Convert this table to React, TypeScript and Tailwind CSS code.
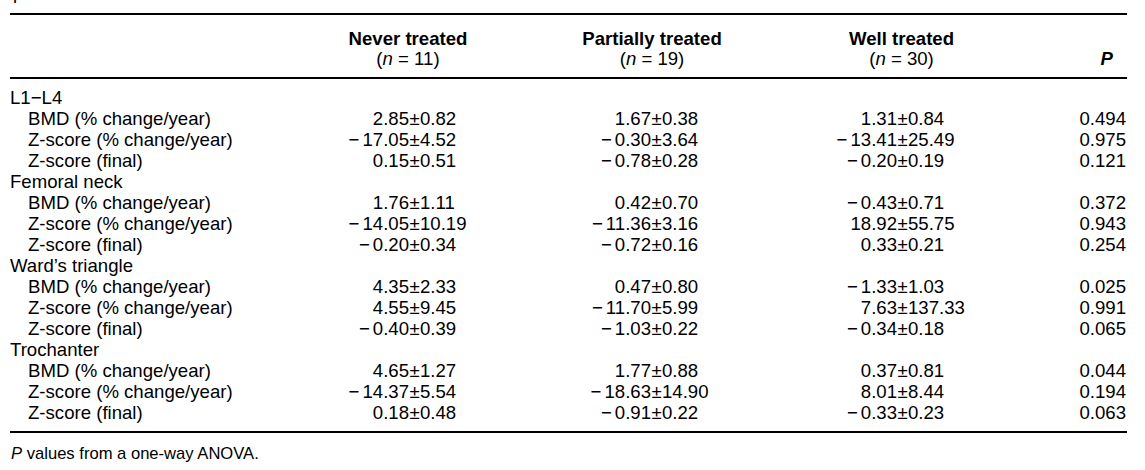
import React from "react";

type Row = { label: string; vals: [string, string, string]; p: string };
type Group = { title: string; rows: Row[] };

const groups: Group[] = [
  {
    title: "L1\u2212L4",
    rows: [
      { label: "BMD (% change/year)", vals: ["2.85±0.82", "1.67±0.38", "1.31±0.84"], p: "0.494" },
      { label: "Z-score (% change/year)", vals: ["-17.05±4.52", "-0.30±3.64", "-13.41±25.49"], p: "0.975" },
      { label: "Z-score (final)", vals: ["0.15±0.51", "-0.78±0.28", "-0.20±0.19"], p: "0.121" },
    ],
  },
  {
    title: "Femoral neck",
    rows: [
      { label: "BMD (% change/year)", vals: ["1.76±1.11", "0.42±0.70", "-0.43±0.71"], p: "0.372" },
      { label: "Z-score (% change/year)", vals: ["-14.05±10.19", "-11.36±3.16", "18.92±55.75"], p: "0.943" },
      { label: "Z-score (final)", vals: ["-0.20±0.34", "-0.72±0.16", "0.33±0.21"], p: "0.254" },
    ],
  },
  {
    title: "Ward\u2019s triangle",
    rows: [
      { label: "BMD (% change/year)", vals: ["4.35±2.33", "0.47±0.80", "-1.33±1.03"], p: "0.025" },
      { label: "Z-score (% change/year)", vals: ["4.55±9.45", "-11.70±5.99", "7.63±137.33"], p: "0.991" },
      { label: "Z-score (final)", vals: ["-0.40±0.39", "-1.03±0.22", "-0.34±0.18"], p: "0.065" },
    ],
  },
  {
    title: "Trochanter",
    rows: [
      { label: "BMD (% change/year)", vals: ["4.65±1.27", "1.77±0.88", "0.37±0.81"], p: "0.044" },
      { label: "Z-score (% change/year)", vals: ["-14.37±5.54", "-18.63±14.90", "8.01±8.44"], p: "0.194" },
      { label: "Z-score (final)", vals: ["0.18±0.48", "-0.91±0.22", "-0.33±0.23"], p: "0.063" },
    ],
  },
];

const GRID =
  "grid grid-cols-[290px_109px_11px_120px_111px_11px_128px_107px_11px_132px_87px]";

function Left({ v }: { v: string }) {
  const neg = v.startsWith("-");
  const num = neg ? v.slice(1) : v;
  return (
    <div className="text-right whitespace-nowrap">
      {neg && <span className="mr-[3px]">{"\u2212"}</span>}
      {num}
    </div>
  );
}

function Header({ title, n }: { title: string; n: string }) {
  return (
    <div className="flex flex-col items-center whitespace-nowrap">
      <div className="font-bold">{title}</div>
      <div>
        (<span className="italic">n</span> = {n})
      </div>
    </div>
  );
}

export default function App() {
  return (
    <div className="w-[1145px] h-[470px] bg-white text-black font-['Liberation_Sans',Arial,sans-serif] overflow-hidden">
      <div className="pl-[10px] pr-[18px]">
        <div className="h-[13px] overflow-hidden">
          <div className="mt-[-18px] pl-[3px] text-[18.6px] leading-[21px]">p</div>
        </div>
        <div className="h-[2px] bg-black" />
        <div className={`${GRID} text-[18.6px] leading-[20px] pt-[14px] pb-[8px]`}>
          <div className="col-start-2 col-span-3 pr-[24px]">
            <Header title="Never treated" n="11" />
          </div>
          <div className="col-start-5 col-span-3 pr-[26px]">
            <Header title="Partially treated" n="19" />
          </div>
          <div className="col-start-8 col-span-3 pr-[27px]">
            <Header title="Well treated" n="30" />
          </div>
          <div className="col-start-11 flex flex-col justify-end items-end pr-[14px]">
            <div className="font-bold italic">P</div>
          </div>
        </div>
        <div className="h-[2px] bg-black" />
        <div className={`${GRID} text-[18.6px] leading-[21px] pt-[8px] pb-[8px]`}>
          {groups.map((g) => (
            <React.Fragment key={g.title}>
              <div className="col-span-11 whitespace-nowrap">{g.title}</div>
              {g.rows.map((r, i) => (
                <React.Fragment key={g.title + i}>
                  <div className="pl-[18px] whitespace-nowrap">{r.label}</div>
                  {r.vals.map((v, j) => {
                    const [a, b] = v.split("±");
                    return (
                      <React.Fragment key={j}>
                        <Left v={a} />
                        <div className="text-center">±</div>
                        <div className="text-left whitespace-nowrap">{b}</div>
                      </React.Fragment>
                    );
                  })}
                  <div className="text-right pr-[1px]">{r.p}</div>
                </React.Fragment>
              ))}
            </React.Fragment>
          ))}
        </div>
        <div className="h-[2px] bg-black" />
        <div className="pt-[11px] text-[16.6px] leading-[20px] pl-[1px]">
          <span className="italic">P</span> values from a one-way ANOVA.
        </div>
      </div>
    </div>
  );
}
